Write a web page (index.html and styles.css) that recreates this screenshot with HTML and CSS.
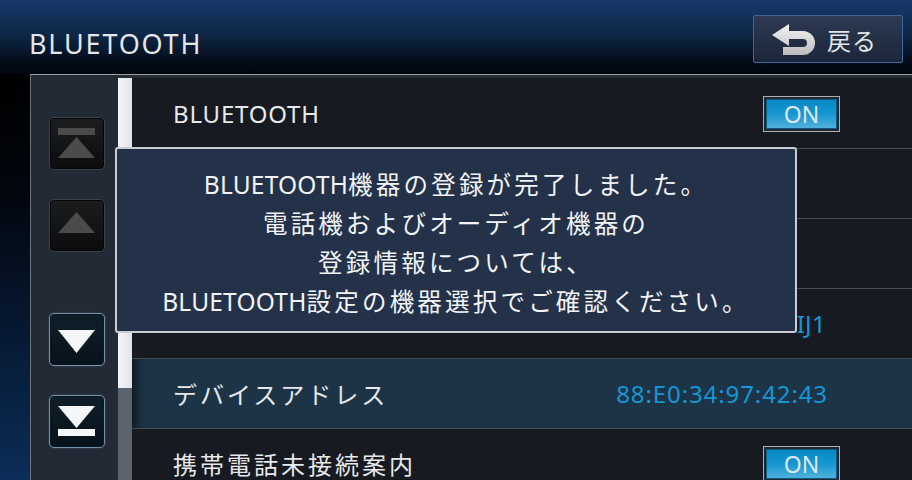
FILE: index.html
```html
<!DOCTYPE html>
<html lang="ja">
<head>
<meta charset="utf-8">
<title>BLUETOOTH</title>
<link rel="stylesheet" href="styles.css">
</head>
<body>
<div class="screen">
  <header class="topbar">
    <h1 class="title">BLUETOOTH</h1>
    <button class="back" type="button">
      <svg class="back-icon" width="46" height="32" viewBox="0 0 46 32" aria-hidden="true">
        <defs>
          <linearGradient id="bk" x1="0" y1="0" x2="0" y2="1">
            <stop offset="0" stop-color="#f4f4f4"/>
            <stop offset="1" stop-color="#bcbcbc"/>
          </linearGradient>
        </defs>
        <path d="M2 11 L19 0 L19 7 L33 7 A12 12 0 0 1 33 31 L13 31 L13 23 L33 23 A4 4 0 0 0 33 15 L19 15 L19 22 Z" fill="url(#bk)"/>
      </svg>
      <span>戻る</span>
    </button>
  </header>
  <main class="main">
    <div class="panel">
      <nav class="side">
        <div class="group">
          <button class="nav off" type="button" aria-label="先頭へ">
            <svg width="54" height="51" viewBox="0 0 54 51"><rect x="8" y="10" width="37" height="7"/><polygon points="26.5,19 8,40 45,40"/></svg>
          </button>
          <button class="nav off" type="button" aria-label="上へ">
            <svg width="54" height="51" viewBox="0 0 54 51"><polygon points="26.5,12 8,33 45,33"/></svg>
          </button>
        </div>
        <div class="group">
          <button class="nav on" type="button" aria-label="下へ">
            <svg width="54" height="51" viewBox="0 0 54 51"><polygon points="8,16 45,16 26.5,39"/></svg>
          </button>
          <button class="nav on" type="button" aria-label="末尾へ">
            <svg width="54" height="51" viewBox="0 0 54 51"><polygon points="8,10 45,10 26.5,32"/><rect x="8" y="33" width="37" height="7"/></svg>
          </button>
        </div>
      </nav>
      <div class="scroll"><div class="thumb"></div></div>
      <ul class="list">
        <li class="row"><span class="label lat">BLUETOOTH</span><span class="toggle">ON</span></li>
        <li class="row"></li>
        <li class="row"></li>
        <li class="row"><span class="val name">IJ1</span></li>
        <li class="row sel"><span class="label">デバイスアドレス</span><span class="val">88:E0:34:97:42:43</span></li>
        <li class="row"><span class="label">携帯電話未接続案内</span><span class="toggle">ON</span></li>
      </ul>
      <div class="dialog" role="dialog">
        <p><span class="lat0">BLUETOOTH</span>機器の登録が完了しました。</p>
        <p>電話機およびオーディオ機器の</p>
        <p>登録情報については、</p>
        <p><span class="lat0">BLUETOOTH</span>設定の機器選択でご確認ください。</p>
      </div>
    </div>
  </main>
</div>
</body>
</html>
```

FILE: styles.css
```css
* {
  box-sizing: border-box;
  margin: 0;
  padding: 0;
}

html,
body {
  width: 912px;
  height: 480px;
  overflow: hidden;
}

body {
  background: #000;
  font-family: "Noto Sans", "Noto Sans CJK JP", sans-serif;
  color: #e8eaec;
}

.screen {
  width: 912px;
  height: 480px;
  display: flex;
  flex-direction: column;
  background: linear-gradient(to bottom, #000 15%, #02060e 40%, #0b2d58 100%);
}

.topbar {
  height: 74px;
  flex: none;
  display: flex;
  justify-content: space-between;
  align-items: flex-start;
  background: linear-gradient(to bottom, #17386a 0%, #0f2849 45%, #030b17 85%, #02070e 100%);
}

.title {
  font-size: 27px;
  font-weight: 400;
  line-height: 27px;
  letter-spacing: 1.8px;
  margin: 30px 0 0 29px;
  color: #e4e6e8;
}

.back {
  margin: 15px 9px 0 0;
  width: 150px;
  height: 48px;
  border: 1px solid #3b6699;
  border-radius: 2px;
  background: linear-gradient(#2d3a52, #1b263a);
  display: flex;
  align-items: center;
  padding-left: 16px;
  gap: 11px;
  color: #e2e4e8;
  font-family: "Noto Sans CJK JP", sans-serif;
  font-size: 24px;
  letter-spacing: 1px;
}

.back-icon {
  flex: none;
  margin-top: 1px;
}

.main {
  flex: 1;
  min-height: 0;
  padding-left: 30px;
  display: flex;
}

.panel {
  flex: 1;
  position: relative;
  display: flex;
  border-left: 1px solid #6c737c;
  border-top: 1px solid #9aa1a9;
  background: #262c33;
}

.side {
  width: 87px;
  flex: none;
  background: #222a35;
  padding: 42px 0 0 18px;
  display: flex;
  flex-direction: column;
  gap: 61px;
}

.group {
  display: flex;
  flex-direction: column;
  gap: 29px;
}

.nav {
  width: 56px;
  height: 53px;
  border: 1px solid;
  border-radius: 5px;
  display: block;
  padding: 0;
}

.nav svg {
  display: block;
}

.nav.off {
  background: linear-gradient(#1c1d1f, #0c0c0d);
  border-color: #3c424a;
  box-shadow: inset 0 0 0 1px #050505;
}

.nav.off svg {
  fill: #4b4b4b;
}

.nav.on {
  background: linear-gradient(#0f1f29, #06121a);
  border-color: #7390a4;
  box-shadow: 0 0 2px rgba(110, 150, 180, 0.5), inset 0 0 0 1px #0a1820;
}

.nav.on svg {
  fill: #f5f6f7;
}

.scroll {
  width: 14px;
  flex: none;
  margin-top: 3px;
  background: #5b636e;
  display: flex;
  flex-direction: column;
}

.thumb {
  height: 310px;
  background: linear-gradient(to right, #f4f5f8, #e1e3e9);
}

.list {
  flex: 1;
  margin-top: 3px;
  padding-top: 1px;
  list-style: none;
  background: #171a20;
  overflow: hidden;
}

.row {
  height: 70px;
  border-bottom: 1px solid #464c54;
  display: flex;
  align-items: center;
  padding: 0 72px 0 41px;
  font-size: 24px;
  letter-spacing: 3px;
  color: #e6e8ea;
  white-space: nowrap;
}

.row .lat {
  letter-spacing: 0.8px;
}

.row.sel {
  background: #1d3447;
  box-shadow: inset 10px 0 8px -6px rgba(0, 0, 0, 0.6);
}

.val {
  margin-left: auto;
  margin-right: 12px;
  color: #1596d6;
  letter-spacing: 0.9px;
}

.val.name {
  margin-right: 14px;
  letter-spacing: 0.3px;
}

.toggle {
  margin-left: auto;
  width: 77px;
  height: 36px;
  border: 1px solid #aab0b6;
  background: linear-gradient(#0586c2, #1797d0 50%, #5db6de);
  box-shadow: inset 0 0 0 2px #20272e, inset 0 0 0 3px #0a5a86;
  color: #dde8ef;
  font-size: 23px;
  letter-spacing: 0;
  line-height: 34px;
  text-align: center;
}

.dialog {
  position: absolute;
  left: 84px;
  top: 72px;
  width: 682px;
  height: 186px;
  border: 2px solid #c9cdd2;
  border-radius: 3px;
  background: #243249;
  display: flex;
  flex-direction: column;
  justify-content: center;
  align-items: center;
  padding-top: 5px;
  color: #f2f4f6;
  font-size: 24.5px;
  letter-spacing: 3.2px;
  line-height: 39px;
  text-align: center;
  white-space: nowrap;
}

.dialog .lat0 {
  letter-spacing: 0.2px;
}
```
